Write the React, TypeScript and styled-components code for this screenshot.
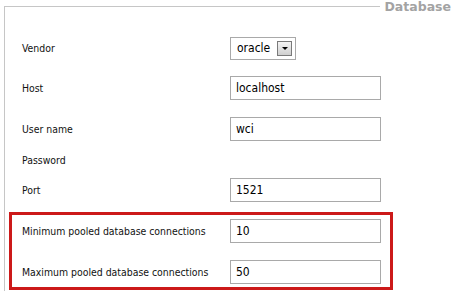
import React from "react";
import styled, { createGlobalStyle } from "styled-components";

const Global = createGlobalStyle`
  html, body { margin: 0; padding: 0; background: #fff; overflow: hidden; }
  body { width: 459px; height: 291px; font-family: "DejaVu Sans Condensed", "DejaVu Sans", sans-serif; }
`;

const Frame = styled.fieldset`
  margin: 0 0 0 4px;
  padding: 0;
  border: 1px solid #c6c6c6;
  border-right: none;
  border-bottom: none;
  height: 291px;
  box-sizing: border-box;
  overflow: hidden;
`;

const Legend = styled.legend`
  margin-left: auto;
  margin-right: 0;
  padding: 0 8px 0 4px;
  font-family: "DejaVu Sans", sans-serif;
  font-weight: bold;
  font-size: 12.5px;
  color: #a3a3a3;
  line-height: 13px;
`;

const Form = styled.div`
  display: flex;
  flex-direction: column;
  padding: 0 0 0 17px;
`;

const Row = styled.div<{ $top: number }>`
  display: grid;
  grid-template-columns: 208px 151px;
  align-items: center;
  height: 24px;
  margin-top: ${(p) => p.$top}px;
`;

const Label = styled.span`
  font-size: 10.4px;
  color: #111;
`;

const Highlight = styled.div`
  display: flex;
  flex-direction: column;
  margin: 10px 0 0 -13px;
  width: 384px;
  box-sizing: border-box;
  border: 3px solid #cc1919;
  padding: 4px 0 3px 10px;
`;

const TextBox = styled.div`
  box-sizing: border-box;
  height: 24px;
  width: 151px;
  border: 1px solid #a9a9a9;
  padding: 0 5px;
  display: flex;
  align-items: center;
  font-size: 12px;
  color: #000;
`;

const Select = styled.div`
  box-sizing: border-box;
  width: 66px;
  height: 23px;
  border: 1px solid #a9a9a9;
  display: flex;
  align-items: center;
  justify-content: space-between;
  padding: 0 3px 0 6px;
  font-size: 12px;
  color: #000;
`;

const DropButton = styled.span`
  box-sizing: border-box;
  width: 15px;
  height: 15px;
  border: 1px solid #7a7a7a;
  background: linear-gradient(#f4f4f4, #cfcfcf);
  display: flex;
  align-items: center;
  justify-content: center;
`;

const Arrow = styled.span`
  width: 0;
  height: 0;
  border-left: 3px solid transparent;
  border-right: 3px solid transparent;
  border-top: 3px solid #000;
`;

export default function App() {
  return (
    <>
      <Global />
      <Frame>
        <Legend>Database</Legend>
        <Form>
          <Row $top={23}>
            <Label>Vendor</Label>
            <Select>
              oracle
              <DropButton>
                <Arrow />
              </DropButton>
            </Select>
          </Row>
          <Row $top={16}>
            <Label>Host</Label>
            <TextBox>localhost</TextBox>
          </Row>
          <Row $top={17}>
            <Label>User name</Label>
            <TextBox>wci</TextBox>
          </Row>
          <Row $top={7}>
            <Label>Password</Label>
            <span />
          </Row>
          <Row $top={6}>
            <Label>Port</Label>
            <TextBox>1521</TextBox>
          </Row>
          <Highlight>
            <Row $top={0}>
              <Label>Minimum pooled database connections</Label>
              <TextBox>10</TextBox>
            </Row>
            <Row $top={17}>
              <Label>Maximum pooled database connections</Label>
              <TextBox>50</TextBox>
            </Row>
          </Highlight>
        </Form>
      </Frame>
    </>
  );
}
